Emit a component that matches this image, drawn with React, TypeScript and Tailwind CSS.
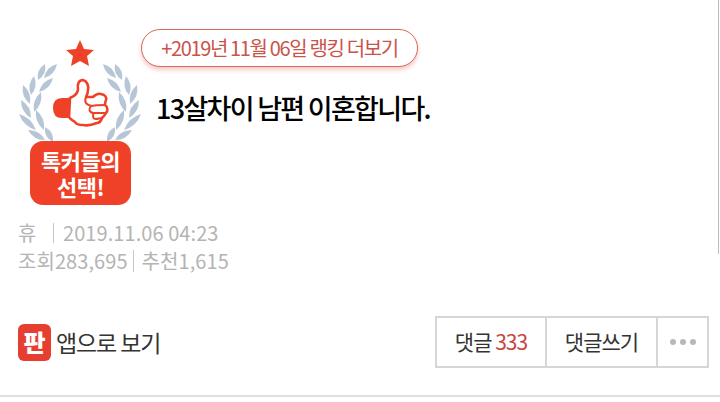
const sans = '"Noto Sans CJK KR", "Noto Sans", sans-serif';

function Leaf({ a, b, w = 6 }: { a: [number, number]; b: [number, number]; w?: number }) {
  const dx = b[0] - a[0];
  const dy = b[1] - a[1];
  const nx = (-dy / Math.hypot(dx, dy)) * w;
  const ny = (dx / Math.hypot(dx, dy)) * w;
  const mx = (a[0] + b[0]) / 2;
  const my = (a[1] + b[1]) / 2;
  return <path d={`M${a[0]} ${a[1]} Q${mx + nx} ${my + ny} ${b[0]} ${b[1]} Q${mx - nx} ${my - ny} ${a[0]} ${a[1]} Z`} fill="#b7c6d6" />;
}

const leaves: [[number, number], [number, number]][] = [
  [[38, 80], [45, 64]],
  [[44, 78], [57, 64]],
  [[31, 95], [34, 76]],
  [[39, 92], [53, 78]],
  [[23, 85], [30, 104]],
  [[34, 112], [41, 92]],
  [[21, 100], [31, 118]],
  [[36, 110], [44, 130]],
  [[19, 114], [36, 130]],
  [[28, 130], [45, 140]],
  [[45, 127], [53, 142]],
];

function Badge() {
  return (
    <div className="relative w-[122px] h-[180px] shrink-0">
      <svg width="122" height="180" viewBox="19 27 122 180" className="absolute inset-0">
        <polygon points="80,40 84,49 94,50 87,56 89,66 80,61 71,66 73,56 66,50 76,49" fill="#ee4127" />
        {leaves.map(([a, b], i) => <Leaf key={i} a={a} b={b} />)}
        <g transform="translate(160 0) scale(-1 1)">
          {leaves.map(([a, b], i) => <Leaf key={i} a={a} b={b} />)}
        </g>
        <path d="M71 98 H62 Q53 98 53 108 Q53 118 62 118 H71 Z" fill="#ee4127" />
        <path d="M70 98 C75 96 78 93 78 89 C77 84 79 80 83 80 C87 81 89 86 88 90 C88 93 87 95 86 97 L93 97 C95 95 98 93 101 94 C105 95 107 97 106 100 C105 102 105 104 105 105 C108 107 108 111 106 113 C105 115 103 117 102 118 C101 121 99 123 97 123 C92 125 87 126 83 125 C79 125 76 124 75 122 C72 120 70 119 69 117 Z" fill="#fff" stroke="#ee4127" strokeWidth="2.6" strokeLinejoin="round" />
        <path d="M86 97 C84 102 86 105 92 106 M92 106 C96 105 100 105 105 105 M91 106 C88 110 90 113 94 113 C97 113 102 113 106 113 M94 113 C92 116 93 119 96 119 C98 119 100 118 102 118" fill="none" stroke="#ee4127" strokeWidth="2" strokeLinecap="round" />
      </svg>
      <div className="absolute left-[11px] bottom-[2px] w-[101px] h-[64px] rounded-[13px] bg-[#ee4127] flex flex-col items-center justify-center text-white font-bold text-[22px] leading-[26px] tracking-[-0.5px]">
        <span>톡커들의</span>
        <span>선택!</span>
      </div>
    </div>
  );
}

export default function App() {
  return (
    <div className="relative w-[720px] h-[402px] bg-white overflow-hidden flex flex-col" style={{ fontFamily: sans }}>
      <div className="flex pl-[19px] pt-[27px]">
        <Badge />
        <div className="flex flex-col items-start">
          <div className="mt-[2px] h-[38px] w-[277px] rounded-[19px] border-[1.5px] border-[#d9675c] bg-white shadow-[0_3px_4px_rgba(217,103,92,0.35)] flex items-center justify-center text-[20px] tracking-[-1.35px] text-[#c9544a]">
            +2019년 11월 06일 랭킹 더보기
          </div>
          <h1 className="mt-[23px] ml-[15px] text-[27px] leading-[36px] font-medium tracking-[-1.7px] text-black">13살차이 남편 이혼합니다.</h1>
        </div>
      </div>
      <div className="pl-[18px] mt-[12px] text-[#b4b4b4] text-[20px] leading-[28px] tracking-[0.07px]">
        <div className="flex items-center">
          <span className="w-[35px]">휴</span>
          <span className="w-[1px] h-[20px] bg-[#c8c8c8] mr-[9px]" />
          <span>2019.11.06 04:23</span>
        </div>
        <div className="flex items-center">
          <span>조회283,695</span>
          <span className="w-[1px] h-[22px] bg-[#c8c8c8] ml-[5px] mr-[8px]" />
          <span>추천1,615</span>
        </div>
      </div>
      <div className="mt-[41px] pl-[18px] pr-[11px] flex items-center justify-between">
        <div className="flex items-center">
          <div className="w-[33px] h-[37px] rounded-[6px] bg-[#e63f32] text-white font-black text-[24px] flex items-center justify-center">판</div>
          <span className="ml-[5px] text-[23px] tracking-[-1.1px] text-[#333]">앱으로 보기</span>
        </div>
        <div className="flex h-[52px] border-2 border-[#d6d6d6] text-[21px] tracking-[-1px] text-[#333]">
          <div className="w-[110px] flex items-center justify-center border-r-2 border-[#d6d6d6]">
            <span>댓글&nbsp;<span className="text-[#c8453f]">333</span></span>
          </div>
          <div className="w-[111px] flex items-center justify-center border-r-2 border-[#d6d6d6]">댓글쓰기</div>
          <div className="w-[49px] flex items-center justify-center gap-[4px]">
            <span className="w-[6px] h-[6px] rounded-full bg-[#b8b8b8]" />
            <span className="w-[6px] h-[6px] rounded-full bg-[#b8b8b8]" />
            <span className="w-[6px] h-[6px] rounded-full bg-[#b8b8b8]" />
          </div>
        </div>
      </div>
      <div className="mt-[27px] h-[2px] bg-[#dedede]" />
      <div className="absolute left-[718px] top-0 w-[1px] h-[254px] bg-[#bdbdbd]" />
    </div>
  );
}
